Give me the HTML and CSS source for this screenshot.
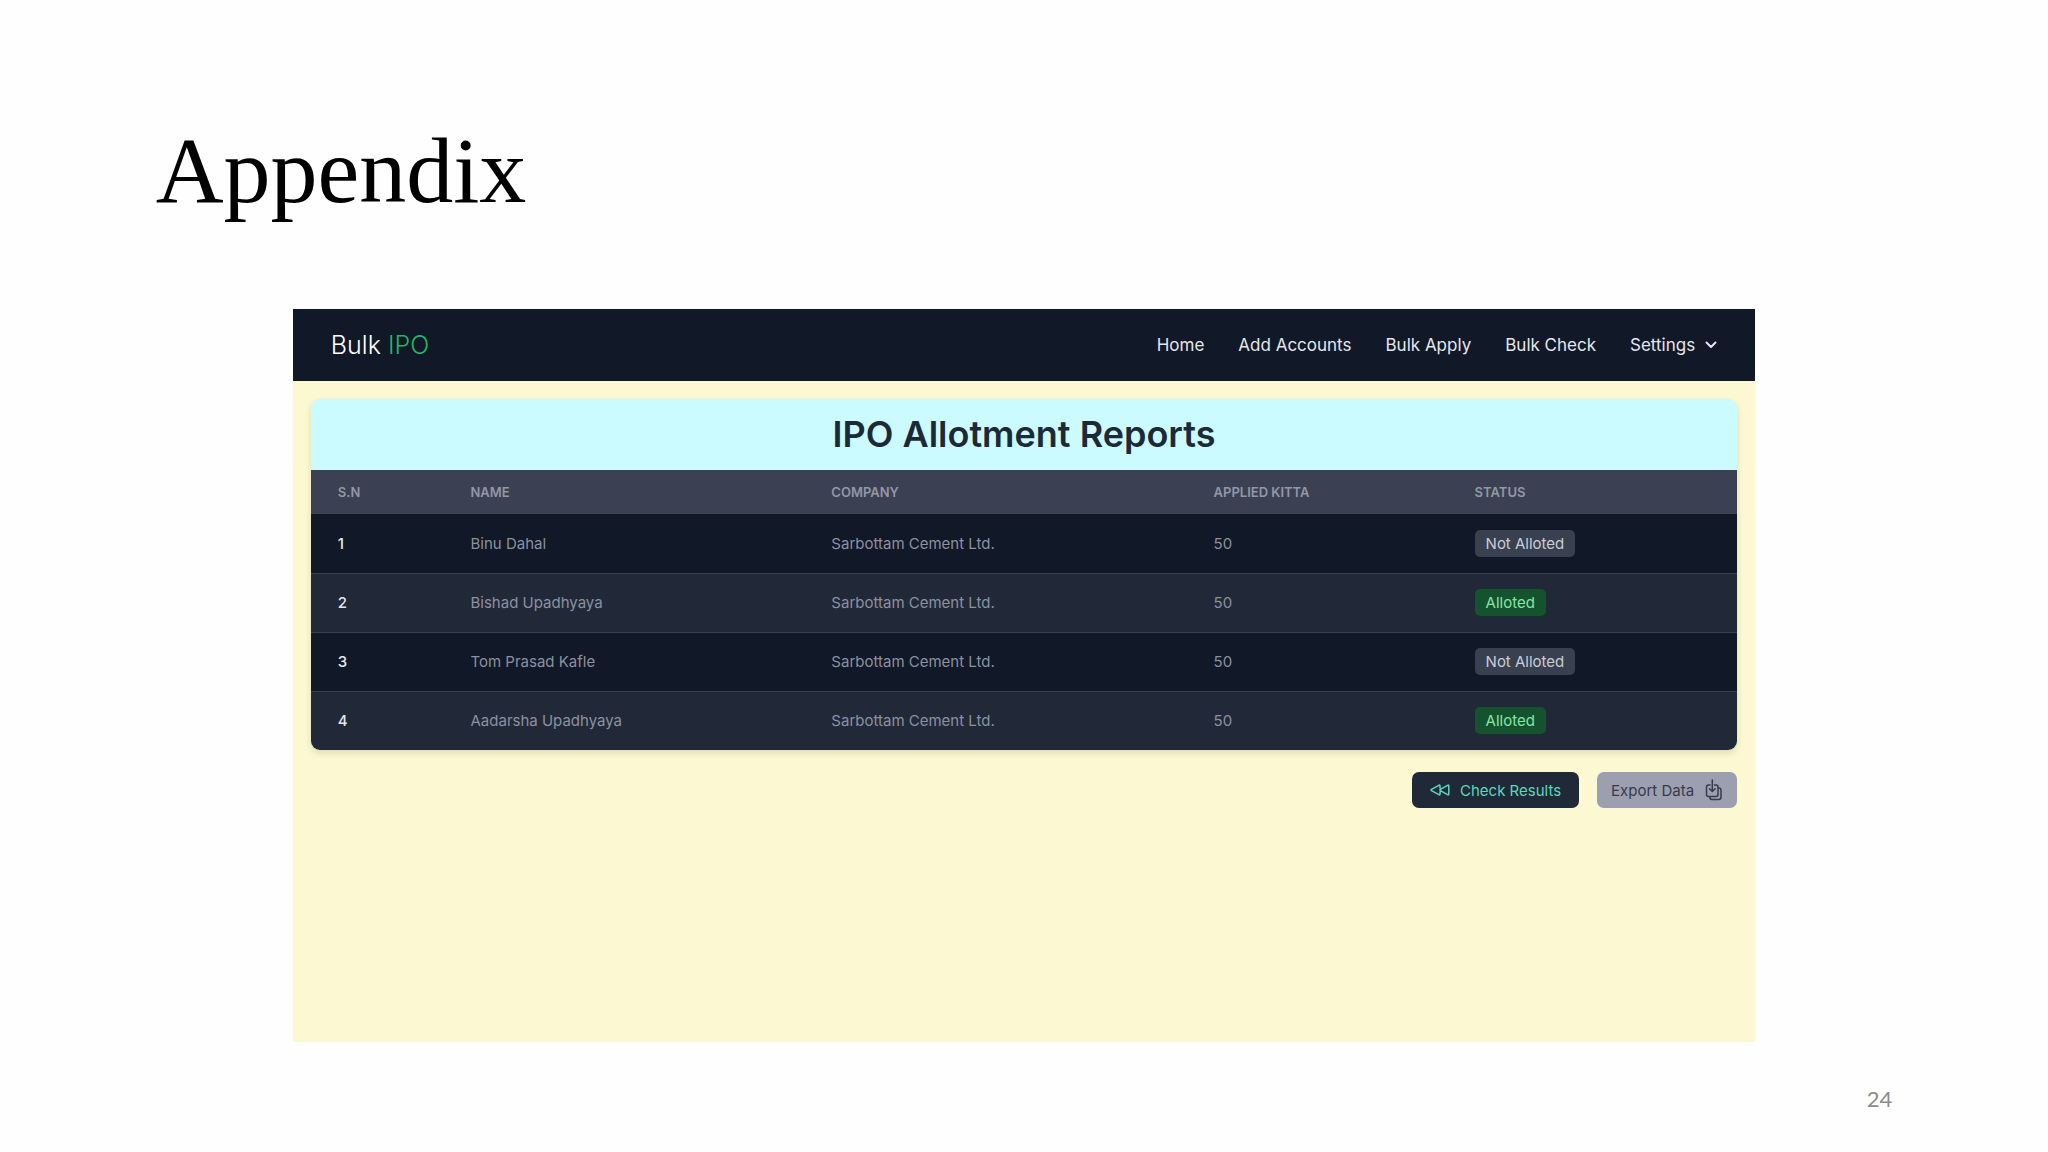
FILE: index.html
```html
<!DOCTYPE html>
<html lang="en">
<head>
<meta charset="utf-8">
<title>Appendix</title>
<link rel="stylesheet" href="styles.css">
</head>
<body>
<main class="slide">
  <h1 class="slide-title">Appendix</h1>
  <section class="app">
    <header class="navbar">
      <a class="brand" href="#">Bulk <span class="brand-accent">IPO</span></a>
      <nav class="menu">
        <a href="#">Home</a>
        <a href="#">Add Accounts</a>
        <a href="#">Bulk Apply</a>
        <a href="#">Bulk Check</a>
        <button class="menu-button" type="button" aria-haspopup="true">Settings
          <svg class="chevron" viewBox="0 0 12 8" aria-hidden="true"><path d="M1.500 1.500 6 6l4.500-4.500"/></svg>
        </button>
      </nav>
    </header>
    <div class="content">
      <div class="card">
        <h2 class="card-title">IPO Allotment Reports</h2>
        <table class="report">
          <colgroup><col class="col-sn"><col class="col-name"><col class="col-company"><col class="col-kitta"><col class="col-status"></colgroup>
          <thead>
            <tr><th scope="col">S.N</th><th scope="col">NAME</th><th scope="col">COMPANY</th><th scope="col">APPLIED KITTA</th><th scope="col">STATUS</th></tr>
          </thead>
          <tbody>
            <tr><th scope="row">1</th><td>Binu Dahal</td><td>Sarbottam Cement Ltd.</td><td>50</td><td><span class="badge">Not Alloted</span></td></tr>
            <tr><th scope="row">2</th><td>Bishad Upadhyaya</td><td>Sarbottam Cement Ltd.</td><td>50</td><td><span class="badge badge-success">Alloted</span></td></tr>
            <tr><th scope="row">3</th><td>Tom Prasad Kafle</td><td>Sarbottam Cement Ltd.</td><td>50</td><td><span class="badge">Not Alloted</span></td></tr>
            <tr><th scope="row">4</th><td>Aadarsha Upadhyaya</td><td>Sarbottam Cement Ltd.</td><td>50</td><td><span class="badge badge-success">Alloted</span></td></tr>
          </tbody>
        </table>
      </div>
      <div class="actions">
        <button class="btn btn-check" type="button">
          <svg class="icon-rewind" viewBox="0 0 20 12" aria-hidden="true"><path d="M10 4V2q0-1.300-1.200-.7l-7.300 4q-1 .7 0 1.400l7.300 4q1.200.6 1.200-.7V8M18.800 2v8q0 1.300-1.200.7l-7.200-4q-1-.7 0-1.400l7.200-4q1.200-.6 1.200.7z"/></svg>
          Check Results
        </button>
        <button class="btn btn-export" type="button">
          Export Data
          <svg class="icon-export" viewBox="0 0 18 22" aria-hidden="true"><path d="M5 6H3.500Q1.500 6 1.500 8v7.500q0 2 2 2H11q2 0 2-2V8q0-2-2-2H9.500M7.300 1v11.500M4.500 9.700l2.800 2.800 2.800-2.800M13 9h.8q2.200 0 2.200 2.200v7.100q0 2.200-2.200 2.200H7q-2.200 0-2.200-2.200v-.8"/></svg>
        </button>
      </div>
    </div>
  </section>
  <footer class="page-number">24</footer>
</main>
</body>
</html>
```
FILE: styles.css
```css
* { box-sizing: border-box; }

body {
  margin: 0;
  background: #fefefe;
  font-family: Inter, "Liberation Sans", sans-serif;
}

a { color: inherit; text-decoration: none; }
button { border: 0; font: inherit; cursor: pointer; }
svg { fill: none; stroke: currentColor; stroke-linecap: round; stroke-linejoin: round; }

.slide {
  display: flex;
  flex-direction: column;
  min-height: 100vh;
  padding: 116px 0 39px;
}

.slide-title {
  margin: 0 7.6% 85px;
  color: #000;
  font: 400 94px/108px "Liberation Serif", serif;
}

/* Application panel */
.app {
  display: flex;
  flex: 1;
  flex-direction: column;
  width: 71.4%;
  margin: 0 auto;
  background: #fbf8d2;
}

.navbar {
  display: flex;
  align-items: center;
  justify-content: space-between;
  height: 72px;
  padding: 0 38px;
  background: #111827;
  color: #e5e7eb;
}

.brand { color: #fff; font-size: 25px; font-weight: 300; }
.brand-accent { color: #22b565; }

.menu { display: flex; align-items: center; gap: 34px; font-size: 17px; }
.menu-button {
  display: flex;
  align-items: center;
  gap: 10px;
  padding: 0;
  background: none;
  color: inherit;
}
.chevron { width: 12px; height: 8px; stroke-width: 2; }

.content { padding: 18px; }

.card {
  overflow: hidden;
  border-radius: 9px;
  background: #ccfbff;
  box-shadow: 0 3px 6px rgba(60, 60, 20, 0.15);
}

.card-title {
  margin: 0;
  color: #1c2a38;
  font-size: 36px;
  font-weight: 600;
  line-height: 71px;
  text-align: center;
}

.report {
  width: 100%;
  border-collapse: collapse;
  table-layout: fixed;
  color: #8b91a0;
  font-size: 15px;
  text-align: left;
}
.col-sn { width: 9.3%; }
.col-name { width: 25.3%; }
.col-company { width: 26.8%; }
.col-kitta { width: 18.3%; }
.col-status { width: 20.3%; }

.report th, .report td { padding: 0 27px; }
.report thead tr { height: 44px; background: #3b4152; color: #9298a7; font-size: 13px; }
.report thead th { font-weight: 600; }
.report tbody tr { height: 59px; background: #111827; }
.report tbody tr:nth-child(even) { background: #212938; }
.report tbody tr + tr { border-top: 1px solid #374151; }
.report tbody th { color: #e5e7eb; font-weight: 500; }

.badge {
  display: inline-block;
  padding: 0 11px;
  border-radius: 5px;
  background: #394050;
  color: #c9cdd6;
  line-height: 27px;
}
.badge-success { background: #14532d; color: #86e5a6; }

.actions {
  display: flex;
  justify-content: flex-end;
  gap: 18px;
  padding-top: 22px;
}
.btn {
  display: flex;
  align-items: center;
  height: 36px;
  border-radius: 7px;
  font-size: 15px;
}
.btn-check { gap: 10px; padding: 0 18px; background: #1f2937; color: #5fd6bd; }
.btn-export { gap: 11px; padding: 0 14px; background: #9c9fb0; color: #363b4b; }
.icon-rewind { width: 20px; height: 12px; stroke-width: 1.5; }
.icon-export { width: 18px; height: 22px; stroke-width: 1.5; }

.page-number {
  margin: 43px 7.6% 0;
  color: #8b8b8b;
  font: 400 22px/28px Lato, sans-serif;
  text-align: right;
}
```
